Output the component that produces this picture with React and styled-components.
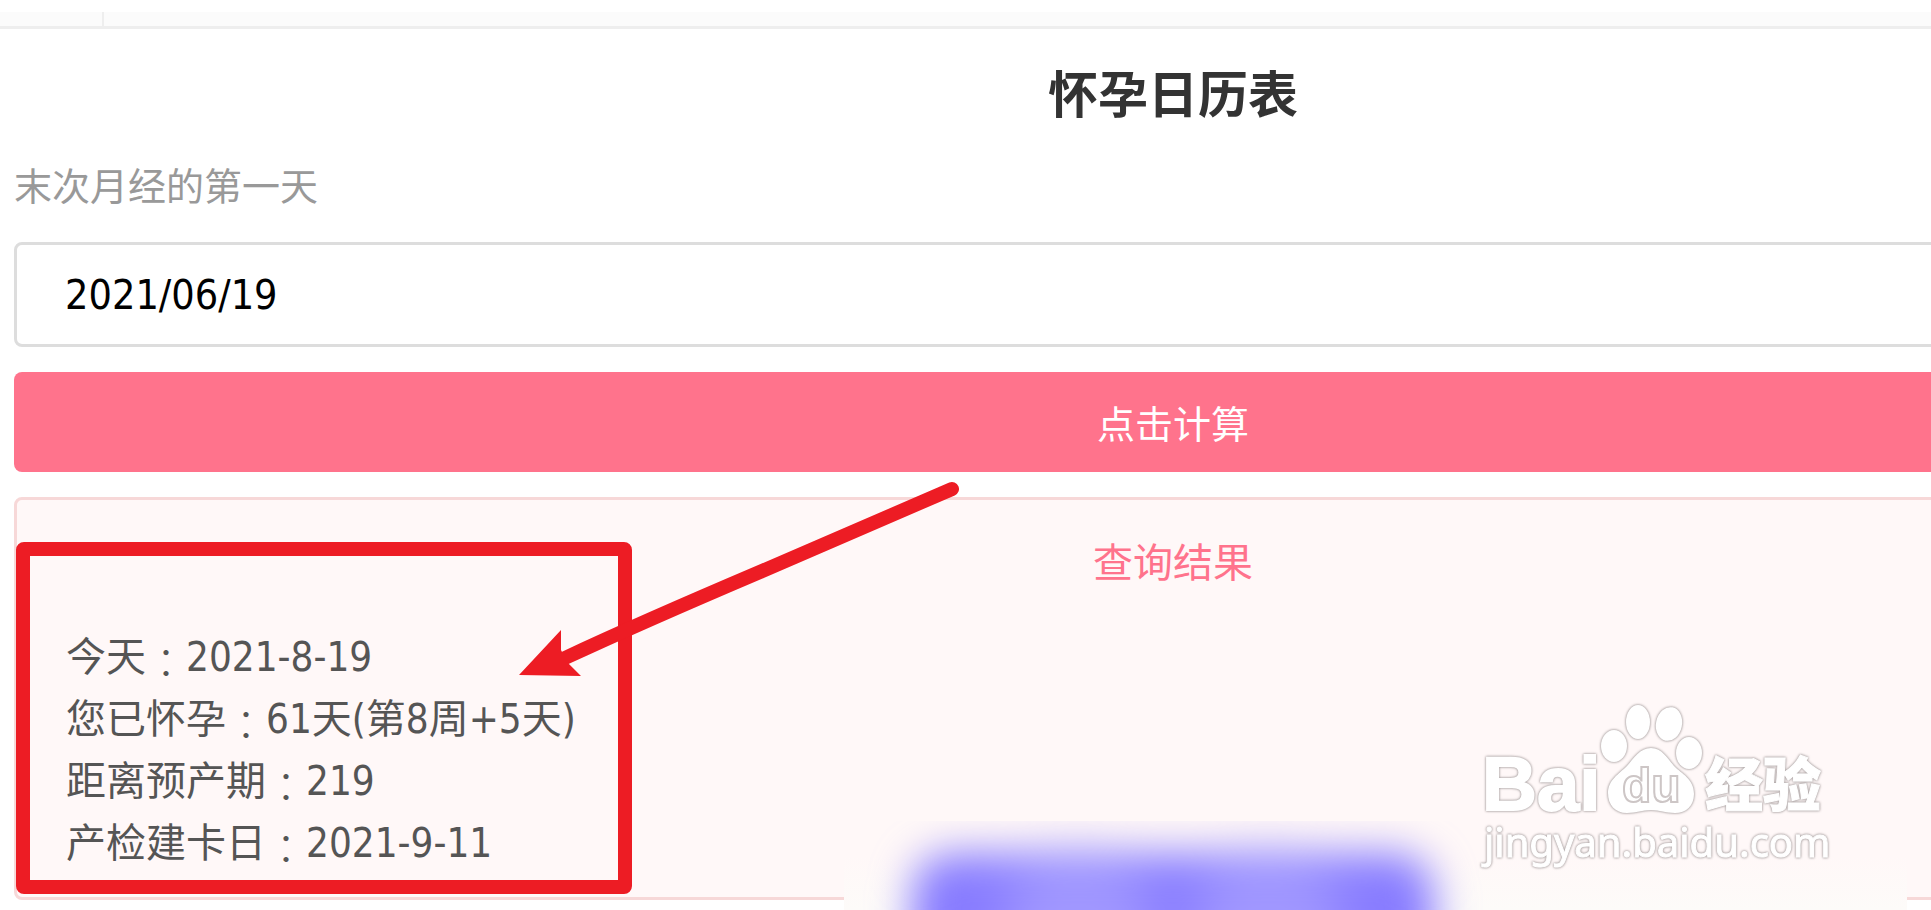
import React, { useState } from 'react';
import styled, { createGlobalStyle } from 'styled-components';

const results = [
  { label: '今天', value: '2021-8-19' },
  { label: '您已怀孕', value: '61天(第8周+5天)' },
  { label: '距离预产期', value: '219' },
  { label: '产检建卡日', value: '2021-9-11' },
];

const App = () => {
  const [date, setDate] = useState('2021/06/19');

  return (
    <Viewport>
      <GlobalStyle />
      <Page>
        <TabStrip>
          <Tab />
        </TabStrip>
        <Main>
          <Title>怀孕日历表</Title>
          <Label htmlFor="lastPeriod">末次月经的第一天</Label>
          <DateInput
            id="lastPeriod"
            type="text"
            value={date}
            onChange={(e) => setDate(e.target.value)}
          />
          <SubmitButton type="button">点击计算</SubmitButton>
          <ResultCard>
            <ResultTitle>查询结果</ResultTitle>
            <ResultList>
              {results.map((item) => (
                <ResultItem key={item.label}>
                  {item.label}
                  <Colon>：</Colon>
                  {item.value}
                </ResultItem>
              ))}
            </ResultList>
          </ResultCard>
        </Main>
        <BlurPatch>
          <BlurBlob>
            <BlurGlow />
            <BlurGlow />
          </BlurBlob>
        </BlurPatch>
        <Highlight />
        <Arrow />
        <Watermark />
      </Page>
    </Viewport>
  );
};

const Arrow = () => (
  <ArrowSvg viewBox="0 0 460 210" aria-hidden="true">
    <path
      d="M442 19 L251 101.500 Q130 153 55 188"
      fill="none"
      stroke="#ed1c24"
      strokeWidth="14"
      strokeLinecap="round"
    />
    <path d="M9 205 L51 160 L51 180 L57 192 L71 206 Z" fill="#ed1c24" />
  </ArrowSvg>
);

const Watermark = () => (
  <WatermarkSvg viewBox="0 0 360 180" role="img" aria-label="Baidu 经验">
    <g fill="#fff">
      <BaiText x="2" y="120">Bai</BaiText>
      <ellipse cx="134" cy="56" rx="13" ry="16" />
      <ellipse cx="158" cy="32" rx="12" ry="17" />
      <ellipse cx="189" cy="34" rx="13" ry="17" transform="rotate(12 189 34)" />
      <ellipse cx="209" cy="63" rx="13" ry="16" />
      <path d="M171 58 C182 58 188 69 194 76 C202 84 214 89 214 104 C214 116 206 123 195 123 C185 123 180 120 171 120 C162 120 157 123 147 123 C135 123 128 115 128 103 C128 90 139 84 147 76 C154 68 160 58 171 58 Z" />
      <DuText x="142" y="112">du</DuText>
      <CnText x="225" y="116">经验</CnText>
      <SiteText x="4" y="167">jingyan.baidu.com</SiteText>
    </g>
  </WatermarkSvg>
);

const GlobalStyle = createGlobalStyle`
  * {
    box-sizing: border-box;
  }

  body {
    margin: 0;
    background: #fff;
    font-family: 'DejaVu Sans Condensed', 'Noto Sans CJK SC', sans-serif;
  }
`;

const Viewport = styled.div`
  min-height: 100vh;
  overflow: hidden;
`;

/* the calculator is wider than the window, its right side runs off screen */
const Page = styled.div`
  position: relative;
  width: calc(100% + 415px);
  min-height: 100vh;
  padding-top: 12px;
`;

const TabStrip = styled.div`
  display: flex;
  height: 17px;
  background: #fbfbfb;
  border-bottom: 3px solid #eee;
`;

const Tab = styled.div`
  width: 104px;
  border-right: 2px solid #eee;
`;

const Main = styled.main`
  display: flex;
  flex-direction: column;
  padding: 37px 14px 0;
`;

const Title = styled.h1`
  margin: 0 0 41px;
  color: #333;
  font-size: 50px;
  font-weight: 700;
  line-height: 60px;
  text-align: center;
`;

const Label = styled.label`
  margin-bottom: 35px;
  color: #999;
  font-size: 38px;
  line-height: 40px;
`;

const DateInput = styled.input`
  width: 100%;
  height: 105px;
  margin-bottom: 25px;
  padding: 0 48px;
  border: 3px solid #ddd;
  border-radius: 8px;
  background: #fff;
  color: #000;
  font-family: inherit;
  font-size: 41px;
  outline: none;
`;

const SubmitButton = styled.button`
  height: 100px;
  margin-bottom: 25px;
  padding: 0 0 2px;
  border: 0;
  border-radius: 8px;
  background: #ff738c;
  color: #fff;
  font-family: inherit;
  font-size: 38px;
  cursor: pointer;
`;

const ResultCard = styled.section`
  padding: 32px 49px 23px;
  border: 3px solid #f7d8d8;
  border-radius: 8px;
  background: #fff8f8;
`;

const ResultTitle = styled.h2`
  margin: 0 0 32px;
  color: #ff738c;
  font-size: 40px;
  font-weight: 400;
  line-height: 62px;
  text-align: center;
`;

const ResultList = styled.ul`
  margin: 0;
  padding: 0;
  list-style: none;
`;

const ResultItem = styled.li`
  display: flex;
  height: 62px;
  color: #555;
  font-size: 40px;
  line-height: 62px;
`;

/* the TC face keeps the full-width colon in the middle of its cell */
const Colon = styled.span`
  padding-top: 4px;
  font-family: 'Noto Sans CJK TC', sans-serif;
  font-weight: 300;
`;

const Highlight = styled.div`
  position: absolute;
  top: 542px;
  left: 16px;
  width: 616px;
  height: 352px;
  border: 14px solid #ed1c24;
  border-radius: 8px;
`;

const ArrowSvg = styled.svg`
  position: absolute;
  top: 470px;
  left: 510px;
  width: 460px;
  height: 210px;
`;

const BlurPatch = styled.div`
  position: absolute;
  top: 821px;
  left: 844px;
  width: 1063px;
  height: 89px;
  padding: 32px 0 0 68px;
  overflow: hidden;
  background: linear-gradient(#fff8f8 40%, #fdfbf9);
`;

const BlurBlob = styled.div`
  display: flex;
  justify-content: center;
  gap: 40px;
  width: 522px;
  height: 160px;
  padding-top: 8px;
  border-radius: 40px;
  background: #887cff;
  filter: blur(20px);
`;

const BlurGlow = styled.div`
  width: 150px;
  height: 120px;
  border-radius: 60px;
  background: #a198ff;
  filter: blur(16px);
`;

const WatermarkSvg = styled.svg`
  position: absolute;
  top: 690px;
  left: 1480px;
  width: 360px;
  height: 180px;
  filter: drop-shadow(0 0 1px #a8a0a0) drop-shadow(0 0 1px #c8c0c0);
`;

const BaiText = styled.text`
  font: 700 76px 'Liberation Sans', sans-serif;
  stroke: #fff;
  stroke-width: 2px;
`;

const DuText = styled.text`
  font: 700 48px 'Liberation Sans', sans-serif;
  fill: #fff;
  stroke: #cdc6c6;
  stroke-width: 2px;
`;

const CnText = styled.text`
  font: 900 58px 'Noto Sans CJK SC', sans-serif;
  stroke: #fff;
  stroke-width: 1px;
`;

const SiteText = styled.text`
  font: 400 40px 'Noto Sans', sans-serif;
  stroke: #fff;
  stroke-width: 1px;
`;

export default App;
